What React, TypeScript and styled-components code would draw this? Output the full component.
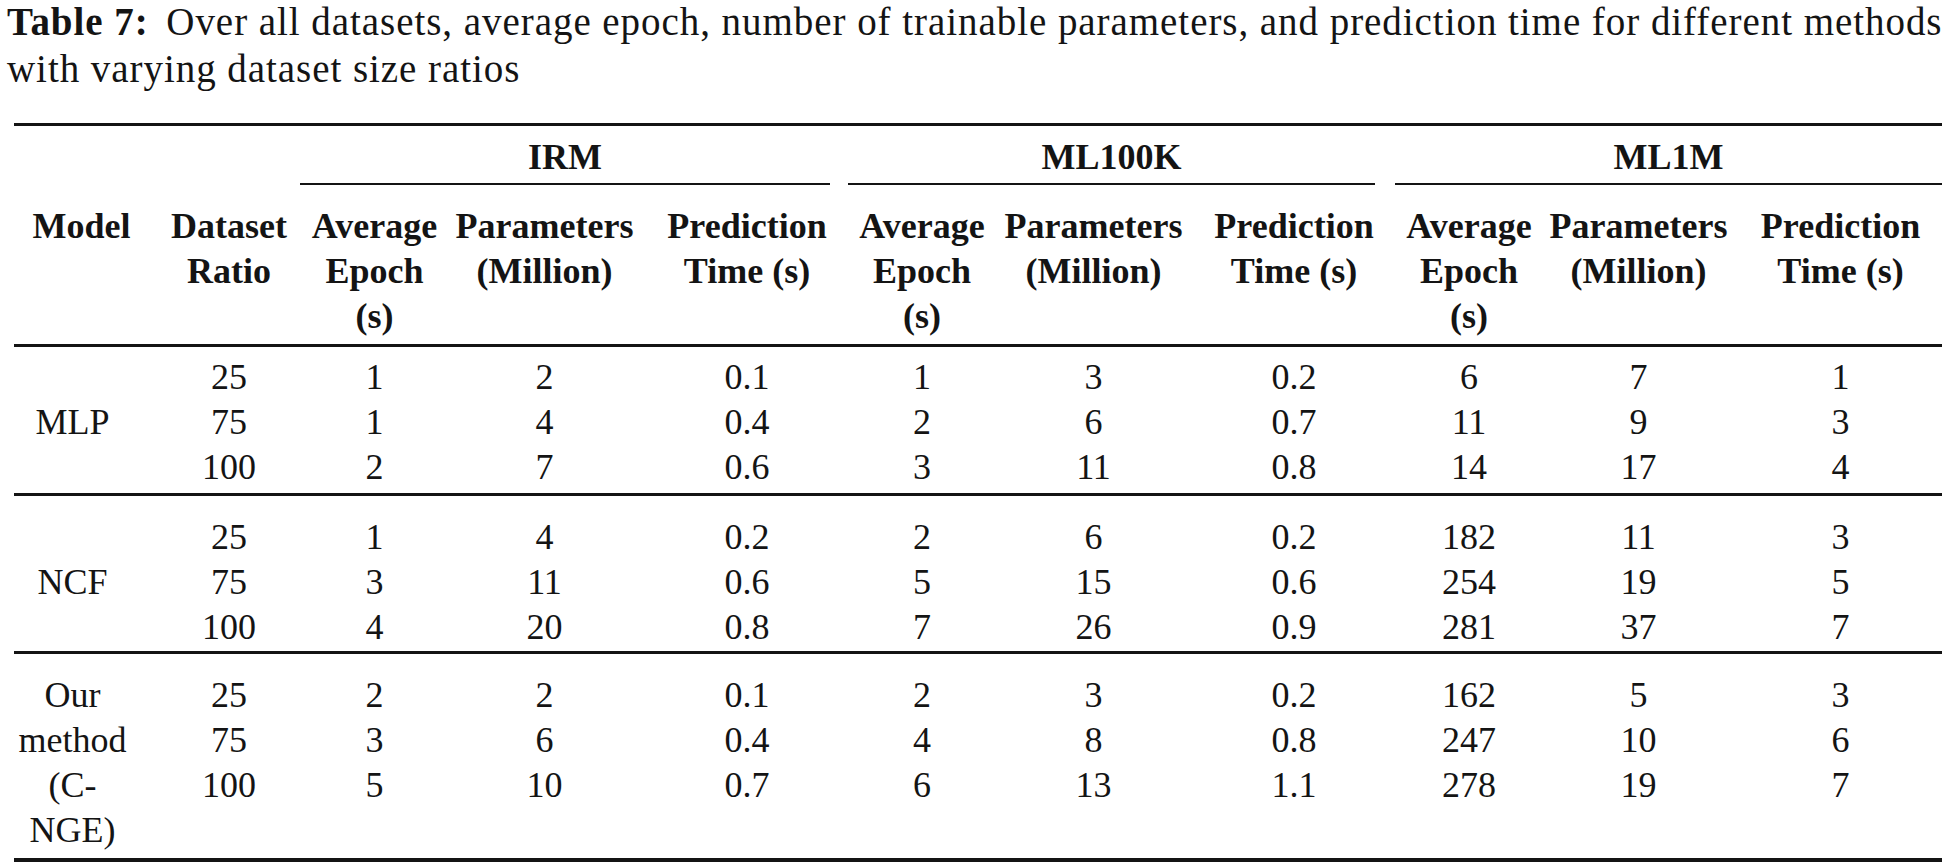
import React from "react";
import styled, { createGlobalStyle } from "styled-components";

const COLS =
  "135px 160px 131px 209px 196px 154px 189px 212px 138px 201px 203px";

const GlobalStyle = createGlobalStyle`
  html, body {
    margin: 0;
    padding: 0;
    background: #ffffff;
  }
  body {
    font-family: "Liberation Serif", "Times New Roman", serif;
    color: #141414;
  }
`;

const Page = styled.div`
  width: 1955px;
  height: 865px;
  overflow: hidden;
  background: #ffffff;
`;

const Caption = styled.div`
  display: flex;
  flex-direction: column;
  gap: 9px;
  padding: 3px 0 0 7px;
  font-size: 39px;
  letter-spacing: 0.95px;
  white-space: nowrap;
`;

const CaptionLine = styled.div`
  line-height: 38px;
`;

const CaptionLabel = styled.strong`
  font-weight: 700;
  margin-right: 7px;
`;

const Table = styled.div`
  margin: 35px 0 0 14px;
  width: 1928px;
  border-top: 3px solid #141414;
  border-bottom: 4px solid #141414;
  font-size: 36px;
  line-height: 45px;
`;

const Grid = styled.div`
  display: grid;
  grid-template-columns: ${COLS};
`;

const GroupLabel = styled.div<{ $start: number; $trimL: number; $trimR: number }>`
  grid-column: ${(p) => p.$start} / span 3;
  margin-left: ${(p) => p.$trimL}px;
  margin-right: ${(p) => p.$trimR}px;
  padding: 9px 0 3px;
  border-bottom: 2px solid #141414;
  text-align: center;
  font-weight: 700;
  white-space: nowrap;
`;

const HeadRow = styled(Grid)`
  padding: 19px 0 5px;
  border-bottom: 3px solid #141414;
`;

const HeadCell = styled.div`
  display: flex;
  flex-direction: column;
  align-items: center;
  font-weight: 700;
`;

const Line = styled.span`
  white-space: nowrap;
`;

const BodyGroup = styled(Grid)<{ $top: number; $bottom: number; $rule: boolean }>`
  grid-auto-rows: 45px;
  padding-top: ${(p) => p.$top}px;
  padding-bottom: ${(p) => p.$bottom}px;
  border-bottom: ${(p) => (p.$rule ? "3px solid #141414" : "none")};
`;

const ModelCell = styled.div<{ $span: number }>`
  grid-column: 1;
  grid-row: 1 / span ${(p) => p.$span};
  align-self: center;
  display: flex;
  flex-direction: column;
  align-items: center;
  padding-right: 18px;
`;

const Cell = styled.div`
  display: flex;
  justify-content: center;
  white-space: nowrap;
`;

type Row = [string, string[]];
type Group = { model: string[]; rows: Row[]; top: number; bottom: number; rule: boolean };

const groups: Group[] = [
  {
    model: ["MLP"],
    top: 8,
    bottom: 3,
    rule: true,
    rows: [
      ["25", ["1", "2", "0.1", "1", "3", "0.2", "6", "7", "1"]],
      ["75", ["1", "4", "0.4", "2", "6", "0.7", "11", "9", "3"]],
      ["100", ["2", "7", "0.6", "3", "11", "0.8", "14", "17", "4"]],
    ],
  },
  {
    model: ["NCF"],
    top: 19,
    bottom: 1,
    rule: true,
    rows: [
      ["25", ["1", "4", "0.2", "2", "6", "0.2", "182", "11", "3"]],
      ["75", ["3", "11", "0.6", "5", "15", "0.6", "254", "19", "5"]],
      ["100", ["4", "20", "0.8", "7", "26", "0.9", "281", "37", "7"]],
    ],
  },
  {
    model: ["Our", "method", "(C-", "NGE)"],
    top: 19,
    bottom: 5,
    rule: false,
    rows: [
      ["25", ["2", "2", "0.1", "2", "3", "0.2", "162", "5", "3"]],
      ["75", ["3", "6", "0.4", "4", "8", "0.8", "247", "10", "6"]],
      ["100", ["5", "10", "0.7", "6", "13", "1.1", "278", "19", "7"]],
    ],
  },
];

const datasets = [
  { name: "IRM", start: 3, trimL: -9, trimR: 15 },
  { name: "ML100K", start: 6, trimL: 3, trimR: 25 },
  { name: "ML1M", start: 9, trimL: -5, trimR: 0 },
];

const metricHeads = [
  ["Average", "Epoch", "(s)"],
  ["Parameters", "(Million)"],
  ["Prediction", "Time (s)"],
];

export default function App() {
  return (
    <Page>
      <GlobalStyle />
      <Caption>
        <CaptionLine>
          <CaptionLabel>Table 7:</CaptionLabel> Over all datasets, average epoch, number of
          trainable parameters, and prediction time for different methods
        </CaptionLine>
        <CaptionLine>with varying dataset size ratios</CaptionLine>
      </Caption>
      <Table role="table">
        <Grid role="row">
          {datasets.map((d) => (
            <GroupLabel key={d.name} $start={d.start} $trimL={d.trimL} $trimR={d.trimR}>
              {d.name}
            </GroupLabel>
          ))}
        </Grid>
        <HeadRow role="row">
          <HeadCell>
            <Line>Model</Line>
          </HeadCell>
          <HeadCell>
            <Line>Dataset</Line>
            <Line>Ratio</Line>
          </HeadCell>
          {datasets.map((d) =>
            metricHeads.map((lines, i) => (
              <HeadCell key={d.name + i}>
                {lines.map((l) => (
                  <Line key={l}>{l}</Line>
                ))}
              </HeadCell>
            ))
          )}
        </HeadRow>
        {groups.map((g) => (
          <BodyGroup key={g.model.join(" ")} $top={g.top} $bottom={g.bottom} $rule={g.rule}>
            <ModelCell $span={Math.max(g.model.length, g.rows.length)}>
              {g.model.map((l) => (
                <Line key={l}>{l}</Line>
              ))}
            </ModelCell>
            {g.rows.map(([ratio, vals]) => (
              <React.Fragment key={ratio}>
                <Cell>{ratio}</Cell>
                {vals.map((v, i) => (
                  <Cell key={i}>{v}</Cell>
                ))}
              </React.Fragment>
            ))}
          </BodyGroup>
        ))}
      </Table>
    </Page>
  );
}
